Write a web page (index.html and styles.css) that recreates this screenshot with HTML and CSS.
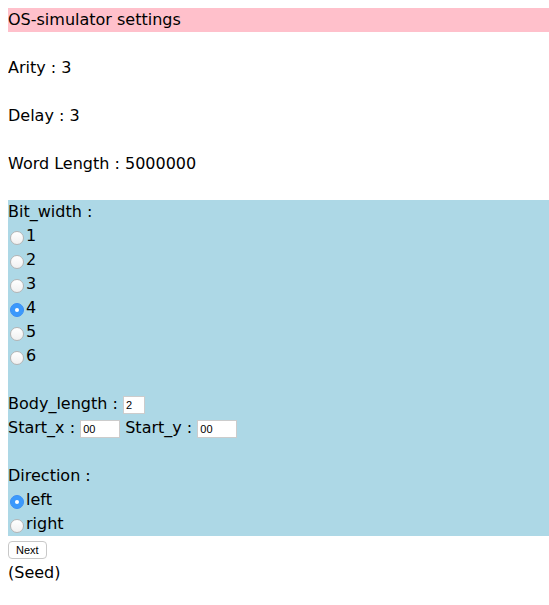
FILE: index.html
```html
<!DOCTYPE html>
<html>
<head>
<meta charset="utf-8">
<link rel="stylesheet" href="styles.css">
</head>
<body>
<div class="title">OS-simulator settings</div>
<br>
<div class="line">Arity : 3</div>
<br>
<div class="line">Delay : 3</div>
<br>
<div class="line">Word Length : 5000000</div>
<br>
<form class="panel">
  <div class="line">Bit_width :</div>
  <label class="opt"><input type="radio" name="bw">1</label>
  <label class="opt"><input type="radio" name="bw">2</label>
  <label class="opt"><input type="radio" name="bw">3</label>
  <label class="opt"><input type="radio" name="bw" checked>4</label>
  <label class="opt"><input type="radio" name="bw">5</label>
  <label class="opt"><input type="radio" name="bw">6</label>
  <br>
  <div class="line">Body_length : <input class="box box-s" type="text" value="2"></div>
  <div class="line">Start_x : <input class="box" type="text" value="00"> Start_y : <input class="box" type="text" value="00"></div>
  <br>
  <div class="line">Direction :</div>
  <label class="opt"><input type="radio" name="dir" checked>left</label>
  <label class="opt"><input type="radio" name="dir">right</label>
</form>
<button class="next" type="button">Next</button>
<div class="line">(Seed)</div>
</body>
</html>
```
FILE: styles.css
```css
body {
  margin: 8px 0 8px 8px;
  font-family: "DejaVu Sans", "Liberation Sans", sans-serif;
  font-size: 16px;
  line-height: 24px;
  color: #000;
  background: #fff;
}
.title {
  background: #ffc0cb;
  height: 24px;
}
.line {
  height: 24px;
}
.panel {
  background: #add8e6;
  margin: 0;
}
.opt {
  display: flex;
  align-items: center;
  height: 24px;
}
.opt input {
  -webkit-appearance: none;
  appearance: none;
  margin: 3px 2px 0 2px;
  width: 14px;
  height: 14px;
  border-radius: 50%;
  border: 1px solid #b5b5b5;
  background: linear-gradient(#ffffff, #f0f0f0);
  box-sizing: border-box;
  position: relative;
}
.opt input:checked {
  border-color: #3b8ff5;
  background: #3b99fc;
}
.opt input:checked::after {
  content: "";
  position: absolute;
  left: 4px;
  top: 4px;
  width: 4px;
  height: 4px;
  border-radius: 50%;
  background: #fff;
}
.box {
  width: 34px;
  height: 16px;
  padding: 0 2px;
  border: 1px solid #ccc;
  font-family: "Liberation Sans", Arial, sans-serif;
  font-size: 11px;
  vertical-align: middle;
  margin: 0;
  box-sizing: content-box;
}
.box-s {
  width: 16px;
}
.next {
  margin: 5px 0 2px 0;
  height: 18px;
  padding: 0 7px;
  font-family: "Liberation Sans", Arial, sans-serif;
  font-size: 11px;
  background: #fff;
  border: 1px solid #c8c8c8;
  border-radius: 4px;
  line-height: 14px;
}
```
